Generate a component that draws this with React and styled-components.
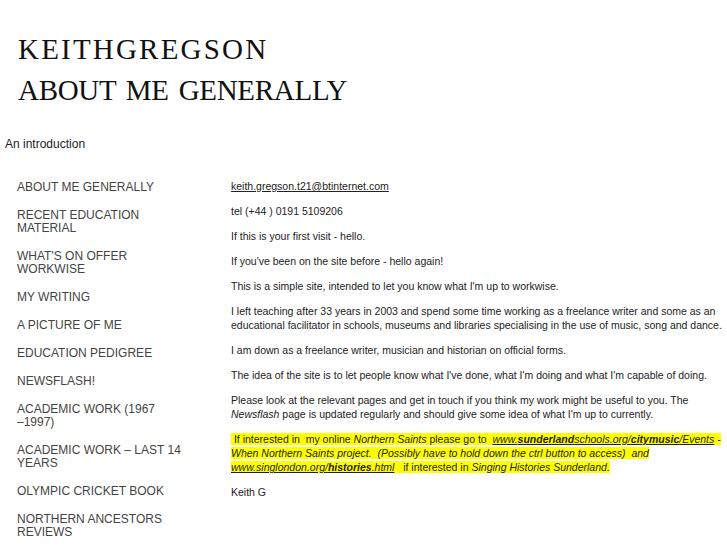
import styled, { createGlobalStyle } from "styled-components";

const GlobalStyle = createGlobalStyle`
  html, body {
    margin: 0;
    padding: 0;
    background: #fff;
  }
  body {
    font-family: "Liberation Sans", Arial, sans-serif;
    color: #222;
  }
`;

const StPage = styled.div`
  width: 727px;
  overflow: hidden;
`;

const StHeader = styled.header`
  padding: 29px 0 0 18px;
`;

const StTitle = styled.h1`
  margin: 0;
  font-family: "Liberation Serif", "Times New Roman", serif;
  font-weight: normal;
  font-size: 29px;
  line-height: 41px;
  letter-spacing: ${(p) => p.$spacing}px;
  word-spacing: ${(p) => p.$words}px;
  color: #111;
  text-transform: uppercase;
  white-space: nowrap;
`;

const StIntro = styled.div`
  margin: 26px 0 0 5px;
  font-size: 12px;
  line-height: 14px;
  color: #222;
`;

const StBody = styled.div`
  display: flex;
  margin-top: 28px;
`;

const StNav = styled.nav`
  width: 171px;
  padding: 2px 0 0 17px;
  flex-shrink: 0;
`;

const StNavItem = styled.a`
  display: block;
  margin-bottom: 15px;
  font-size: 12px;
  line-height: 13px;
  color: #444;
  text-decoration: none;
  text-transform: uppercase;
`;

const StMain = styled.main`
  flex: 1;
  padding: 0 4px 0 43px;
  font-size: 10.5px;
  line-height: 14px;
  color: #222;
`;

const StPara = styled.p`
  margin: 0 0 11px;
`;

const StMark = styled.span`
  background: #ffff00;
`;

const StLink = styled.a`
  color: #222;
  text-decoration: underline;
`;

const navItems = [
  "About me generally",
  "Recent education material",
  "What's on offer workwise",
  "My writing",
  "A picture of me",
  "Education pedigree",
  "Newsflash!",
  "Academic work (1967 \u2013\u20601997)",
  "Academic work \u2013 last 14 years",
  "Olympic cricket book",
  "Northern Ancestors reviews",
];

function App() {
  return (
    <StPage>
      <GlobalStyle />
      <StHeader>
        <StTitle $spacing={2.2} $words={0}>
          KeithGregson
        </StTitle>
        <StTitle $spacing={-0.3} $words={3}>
          About me generally
        </StTitle>
      </StHeader>

      <StIntro>An introduction</StIntro>

      <StBody>
        <StNav>
          {navItems.map((item) => (
            <StNavItem key={item} href="#">
              {item}
            </StNavItem>
          ))}
        </StNav>

        <StMain>
          <StPara>
            <StLink href="#">keith.gregson.t21@btinternet.com</StLink>
          </StPara>
          <StPara>tel (+44 ) 0191 5109206</StPara>
          <StPara>If this is your first visit - hello.</StPara>
          <StPara>If you've been on the site before - hello again!</StPara>
          <StPara>
            This is a simple site, intended to let you know what I'm up to
            workwise.
          </StPara>
          <StPara>
            I left teaching after 33 years in 2003 and spend some time working
            as a freelance writer and some as an educational facilitator in
            schools, museums and libraries specialising in the use of music,
            song and dance.
          </StPara>
          <StPara>
            I am down as a freelance writer, musician and historian on official
            forms.
          </StPara>
          <StPara>
            The idea of the site is to let people know what I've done, what I'm
            doing and what I'm capable of doing.
          </StPara>
          <StPara>
            Please look at the relevant pages and get in touch if you think my
            work might be useful to you. The <i>Newsflash</i> page is updated
            regularly and should give some idea of what I'm up to currently.
          </StPara>
          <StPara>
            <StMark>
              &nbsp;If interested in &nbsp;my online <i>Northern Saints</i>{" "}
              please go to &nbsp;
              <StLink href="#">
                <i>
                  www.<b>sunderland</b>schools.org/<b>citymusic</b>/Events
                </i>
              </StLink>{" "}
              -{" "}
              <i>
                When Northern Saints project. &nbsp;(Possibly have to hold down
                the ctrl button to access)
              </i>
              &nbsp; <i>and</i>{" "}
              <StLink href="#">
                <i>
                  www.singlondon.org/<b>histories</b>.html
                </i>
              </StLink>
              &nbsp;&nbsp; if interested in{" "}
              <i>Singing Histories Sunderland.</i>
            </StMark>
          </StPara>
          <StPara>Keith G</StPara>
        </StMain>
      </StBody>
    </StPage>
  );
}

export default App;
